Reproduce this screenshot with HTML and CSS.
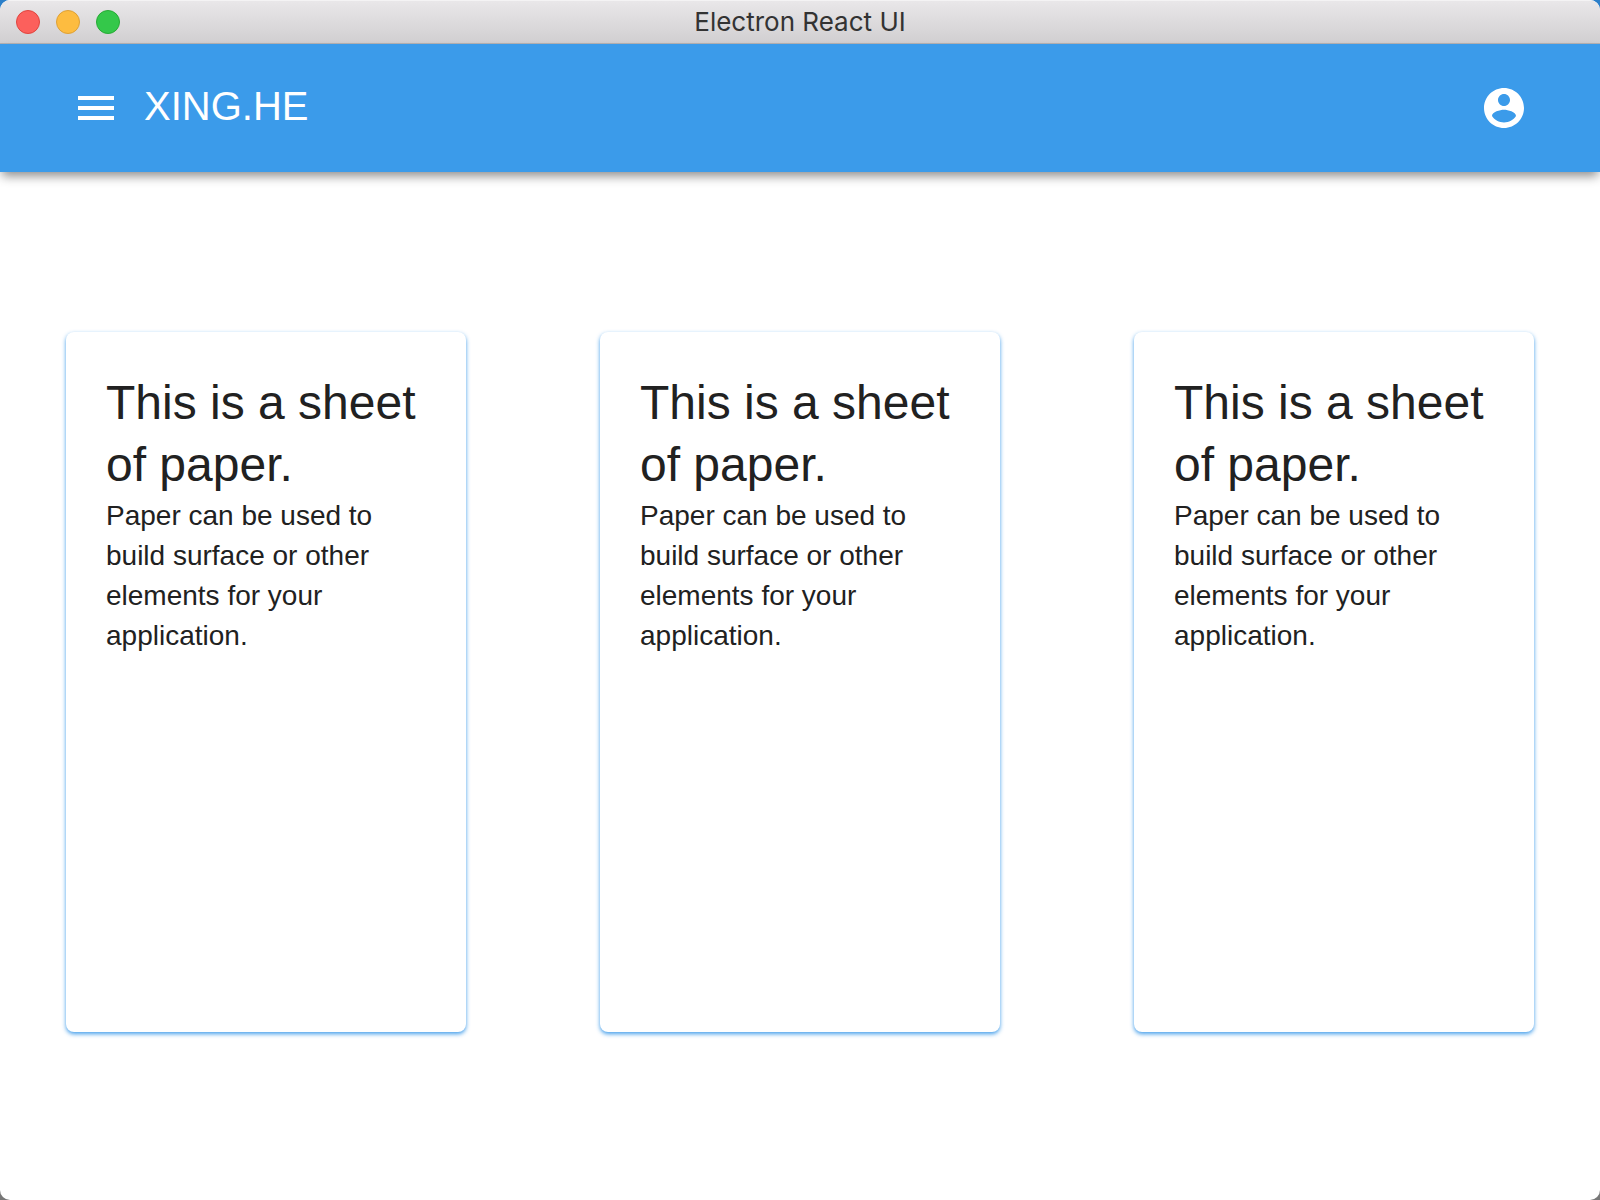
FILE: index.html
```html
<!DOCTYPE html>
<html lang="en">
<head>
<meta charset="utf-8">
<meta name="viewport" content="width=device-width, initial-scale=1">
<title>Electron React UI</title>
<link rel="stylesheet" href="styles.css">
</head>
<body>
<div class="window">
  <header class="titlebar">
    <div class="controls">
      <button class="control close" type="button" aria-label="Close"></button>
      <button class="control minimize" type="button" aria-label="Minimize"></button>
      <button class="control maximize" type="button" aria-label="Maximize"></button>
    </div>
    <div class="window-title">Electron React UI</div>
  </header>
  <nav class="appbar">
    <button class="icon-button" type="button" aria-label="Menu">
      <svg class="icon" viewBox="0 0 24 24"><path d="M3 18h18v-2H3v2zm0-5h18v-2H3v2zm0-7v2h18V6H3z"/></svg>
    </button>
    <h1 class="brand">XING.HE</h1>
    <button class="icon-button" type="button" aria-label="Account">
      <svg class="icon" viewBox="0 0 24 24"><path d="M12 2C6.480 2 2 6.480 2 12s4.480 10 10 10 10-4.480 10-10S17.520 2 12 2zm0 3c1.660 0 3 1.340 3 3s-1.340 3-3 3-3-1.340-3-3 1.340-3 3-3zm0 14.200c-2.500 0-4.710-1.280-6-3.220.030-1.990 4-3.080 6-3.080 1.990 0 5.970 1.090 6 3.080-1.290 1.940-3.500 3.220-6 3.220z"/></svg>
    </button>
  </nav>
  <main class="sheets">
    <article class="paper">
      <h2 class="paper-title">This is a sheet of paper.</h2>
      <p class="paper-text">Paper can be used to build surface or other elements for your application.</p>
    </article>
    <article class="paper">
      <h2 class="paper-title">This is a sheet of paper.</h2>
      <p class="paper-text">Paper can be used to build surface or other elements for your application.</p>
    </article>
    <article class="paper">
      <h2 class="paper-title">This is a sheet of paper.</h2>
      <p class="paper-text">Paper can be used to build surface or other elements for your application.</p>
    </article>
  </main>
</div>
</body>
</html>
```
FILE: styles.css
```css
* {
  box-sizing: border-box;
}

body {
  margin: 0;
  background: linear-gradient(#2b7fc9 50%, #777 50%);
  color: #212121;
  font-family: "Liberation Sans", Arial, sans-serif;
}

.window {
  display: flex;
  flex-direction: column;
  min-height: 100vh;
  overflow: hidden;
  border-radius: 10px;
  background: #fff;
}

.titlebar {
  display: grid;
  grid-template-columns: 1fr auto 1fr;
  align-items: center;
  height: 44px;
  padding: 0 16px;
  border-top: 1px solid #f4f3f4;
  border-bottom: 1px solid #b3b1b3;
  background: linear-gradient(#e9e7e9, #d1cfd1);
}

.controls {
  display: flex;
  gap: 16px;
}

.control {
  width: 24px;
  height: 24px;
  padding: 0;
  border: 1px solid;
  border-radius: 50%;
}

.close {
  border-color: #e0443e;
  background: #fc605c;
}

.minimize {
  border-color: #dea035;
  background: #fdbc40;
}

.maximize {
  border-color: #27aa35;
  background: #34c84a;
}

.window-title {
  color: #333;
  font: 26px/32px Inter, sans-serif;
}

.appbar {
  z-index: 1;
  display: flex;
  align-items: center;
  gap: 24px;
  height: 128px;
  padding: 0 72px;
  background: #3b9bea;
  color: #fff;
  box-shadow: 0 6px 10px -2px rgba(0, 0, 0, 0.45);
}

.icon-button {
  width: 48px;
  height: 48px;
  padding: 0;
  border: 0;
  background: none;
  color: inherit;
}

.icon {
  display: block;
  width: 48px;
  height: 48px;
  fill: currentColor;
}

.brand {
  flex: 1;
  margin: 0;
  padding-bottom: 4px;
  font-size: 40px;
  font-weight: 400;
  line-height: 48px;
}

.sheets {
  display: flex;
  flex: 1;
  align-items: flex-start;
  justify-content: space-between;
  padding: 160px 66px;
}

.paper {
  width: 400px;
  min-height: 700px;
  padding: 40px;
  border-radius: 8px;
  background: #fff;
  box-shadow: 0 2px 4px rgba(33, 140, 230, 0.85);
}

.paper-title {
  margin: 0;
  font-size: 48px;
  font-weight: 400;
  line-height: 62px;
}

.paper-text {
  margin: 0;
  font-size: 28px;
  line-height: 40px;
}
```
